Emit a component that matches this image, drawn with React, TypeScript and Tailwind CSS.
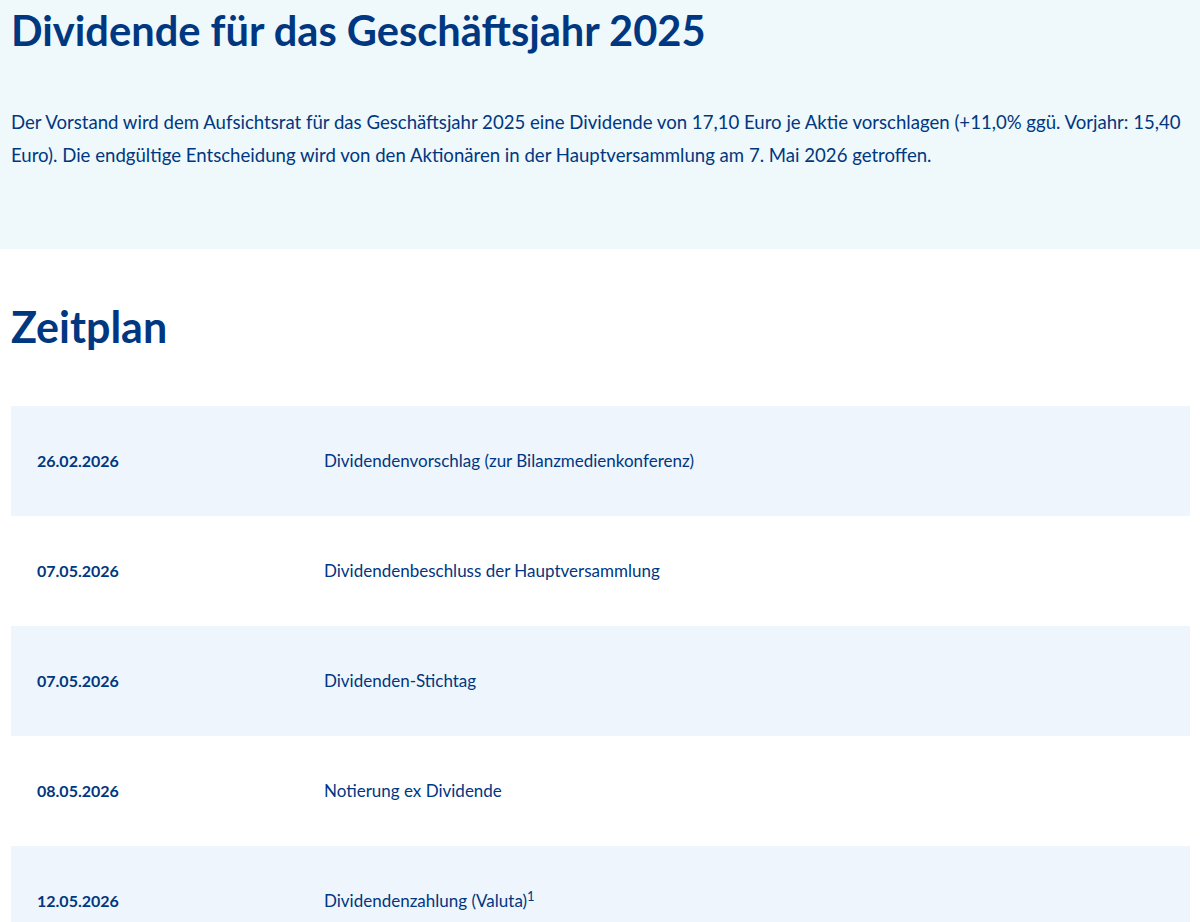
const rows = [
  { date: "26.02.2026", label: "Dividendenvorschlag (zur Bilanzmedienkonferenz)" },
  { date: "07.05.2026", label: "Dividendenbeschluss der Hauptversammlung" },
  { date: "07.05.2026", label: "Dividenden-Stichtag" },
  { date: "08.05.2026", label: "Notierung ex Dividende" },
  { date: "12.05.2026", label: "Dividendenzahlung (Valuta)", note: "1" },
];

export default function App() {
  return (
    <main className="min-h-screen bg-white text-[#003781] font-['Lato',sans-serif]">
      <section className="bg-[#eff8fa] px-[11px] pt-[6px] h-[249px]">
        <h1 className="text-[41.6px] font-bold leading-[48px]">
          Dividende für das Geschäftsjahr 2025
        </h1>
        <p className="mt-[52px] text-[18.6px] leading-[33px]">
          Der Vorstand wird dem Aufsichtsrat für das Geschäftsjahr 2025 eine Dividende von 17,10 Euro je Aktie
          vorschlagen (+11,0% ggü. Vorjahr: 15,40 Euro). Die endgültige Entscheidung wird von den Aktionären in der
          Hauptversammlung am 7. Mai 2026 getroffen.
        </p>
      </section>

      <section className="px-[11px] pr-[10px]">
        <h2 className="mt-[54px] text-[43px] font-bold leading-[48px]">Zeitplan</h2>
        <div className="mt-[55px]">
          {rows.map((row, i) => (
            <div
              key={i}
              className={`flex items-center h-[110px] ${i % 2 === 0 ? "bg-[#eef5fc]" : "bg-white"}`}
            >
              <div className="w-[313px] pl-[26px] text-[16px] font-bold">{row.date}</div>
              <div className="text-[17px]">
                {row.label}
                {row.note && <sup className="text-[13px]">{row.note}</sup>}
              </div>
            </div>
          ))}
        </div>
      </section>
    </main>
  );
}
